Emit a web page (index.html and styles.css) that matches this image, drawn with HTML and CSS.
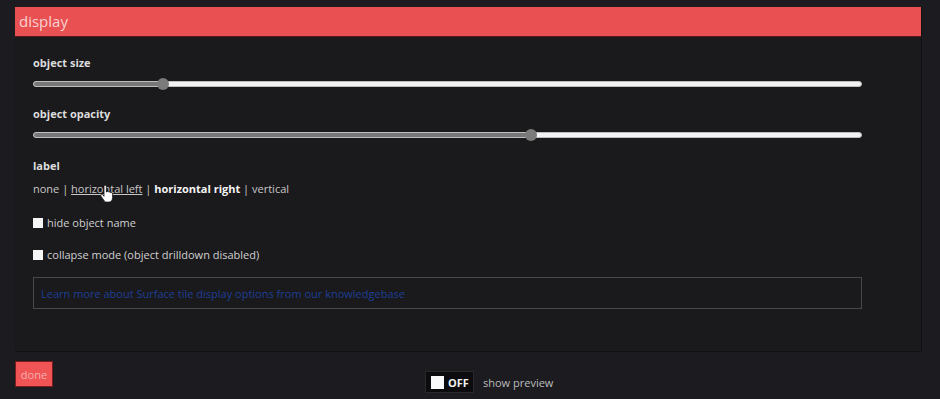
FILE: index.html
```html
<!DOCTYPE html>
<html lang="en">
<head>
    <meta charset="UTF-8">
    <meta name="viewport" content="width=device-width, initial-scale=1.0">
    <link rel="stylesheet" href="styles.css">
    <title>Display</title>
</head>
<body class="page">
    <div class="panel">
        <div class="panel-head">display</div>
        <div class="panel-body">
            <div class="field">
                <div class="field-title">object size</div>
                <div class="slider">
                    <div class="slider-fill" style="width: 129px"></div>
                    <div class="slider-thumb" style="left: 123px"></div>
                </div>
            </div>
            <div class="field">
                <div class="field-title">object opacity</div>
                <div class="slider">
                    <div class="slider-fill" style="width: 497px"></div>
                    <div class="slider-thumb" style="left: 491px"></div>
                </div>
            </div>
            <div class="field">
                <div class="field-title">label</div>
                <div class="options">
                    <span class="opt">none</span>
                    <span class="sep">|</span>
                    <span class="opt opt-hover">horizontal left<svg class="cursor" width="14" height="18" viewBox="0 0 14 18"><path d="M4 1.5c0-.8.6-1.3 1.2-1.3s1.2.5 1.2 1.3V7l.4-.1c.5-.8 1.9-.6 2.1.3.6-.6 1.8-.3 2 .5.7-.4 1.7.1 1.7 1v3.8c0 2.3-1.4 4.6-3.6 4.6H6.6c-1.3 0-2-.7-2.700-1.7L1 11.2c-.5-.8-.2-1.6.5-1.8.6-.2 1.1.1 1.5.6L4 11.3z" fill="#fff" stroke="#111" stroke-width="0.8"/></svg></span>
                    <span class="sep">|</span>
                    <span class="opt opt-active">horizontal right</span>
                    <span class="sep">|</span>
                    <span class="opt">vertical</span>
                </div>
            </div>
            <label class="check"><span class="box"></span>hide object name</label>
            <label class="check"><span class="box"></span>collapse mode (object drilldown disabled)</label>
            <div class="kb">
                <a class="kb-link" href="#">Learn more about Surface tile display options from our knowledgebase</a>
            </div>
        </div>
    </div>
    <div class="footer">
        <button class="done">done</button>
        <div class="preview">
            <div class="toggle"><span class="toggle-box"></span>OFF</div>
            <span class="preview-text">show preview</span>
        </div>
    </div>
</body>
</html>
```

FILE: styles.css
```css
*{
    margin: 0;
    padding: 0;
    box-sizing: border-box;
}
:root{
    --text-color: #d6d6d6;
    --red: #e85052;
}
.page{
    background-color: #1c1b1f;
    font-family: "Open Sans", "Noto Sans", sans-serif;
    font-size: 11px;
    color: var(--text-color);
    padding-top: 7px;
    height: 399px;
    overflow: hidden;
}
.panel{
    margin-left: 15px;
    width: 907px;
    height: 345px;
    background: #1a191c;
    border-right: 1px solid #121114;
    border-bottom: 1px solid #121114;
}
.panel-head{
    background: var(--red);
    height: 30px;
    padding-left: 4px;
    line-height: 29px;
    font-size: 15px;
    color: #fbd0d0;
    border-bottom: 1px solid #5a1a1c;
}
.panel-body{
    padding: 18px 59px 0 18px;
}
.field-title{
    font-weight: bold;
    height: 16px;
    line-height: 16px;
    color: #dcdcdc;
}
.field{
    margin-bottom: 19px;
}
.slider{
    position: relative;
    margin-top: 10px;
    height: 6px;
    border-radius: 3px;
    background: #f2f2f2;
    border: 1px solid #bdbdbd;
}
.slider-fill{
    height: 100%;
    background: #777;
    border-radius: 3px 0 0 3px;
}
.slider-thumb{
    position: absolute;
    top: -4px;
    width: 12px;
    height: 12px;
    border-radius: 50%;
    background: #7b7b7b;
}
.field:nth-child(2){
    margin-bottom: 20px;
}
.field:nth-child(3){
    margin-bottom: 0;
}
.options{
    margin-top: 7px;
    height: 16px;
    line-height: 16px;
    color: #c8c8c8;
}
.opt-hover{
    position: relative;
    text-decoration: underline;
}
.opt-active{
    font-weight: bold;
    color: #f4f4f4;
}
.sep{
    color: #cfcfcf;
}
.cursor{
    position: absolute;
    left: 29px;
    top: 4px;
}
.check{
    display: flex;
    align-items: center;
    height: 16px;
    margin-top: 17px;
    color: #d0d0d0;
}
.check + .check{
    margin-top: 16px;
}
.box{
    width: 10px;
    height: 10px;
    background: #f5f5f5;
    margin-right: 4px;
    margin-top: 1px;
}
.kb{
    margin-top: 15px;
    height: 32px;
    border: 1px solid #48474b;
    padding-left: 7px;
    display: flex;
    align-items: center;
}
.kb-link{
    color: #1d3f94;
    text-decoration: none;
    font-size: 11px;
}
.footer{
    display: flex;
    align-items: flex-start;
    padding-top: 9px;
    padding-left: 15px;
}
.done{
    width: 38px;
    height: 26px;
    border: 1px solid #7a1c1e;
    background: #f05454;
    color: #f6b0b0;
    font-family: "Open Sans", "Noto Sans", sans-serif;
    font-size: 11px;
}
.preview{
    display: flex;
    align-items: center;
    margin-left: 372px;
    margin-top: 10px;
}
.toggle{
    display: flex;
    align-items: center;
    width: 49px;
    height: 22px;
    padding-left: 5px;
    background: #0c0b0d;
    border: 1px solid #29282b;
    font-weight: bold;
    color: #f2f2f2;
}
.toggle-box{
    width: 13px;
    height: 13px;
    background: #fafafa;
    margin-right: 4px;
}
.preview-text{
    margin-left: 9px;
    color: #bdbdbd;
}
```
